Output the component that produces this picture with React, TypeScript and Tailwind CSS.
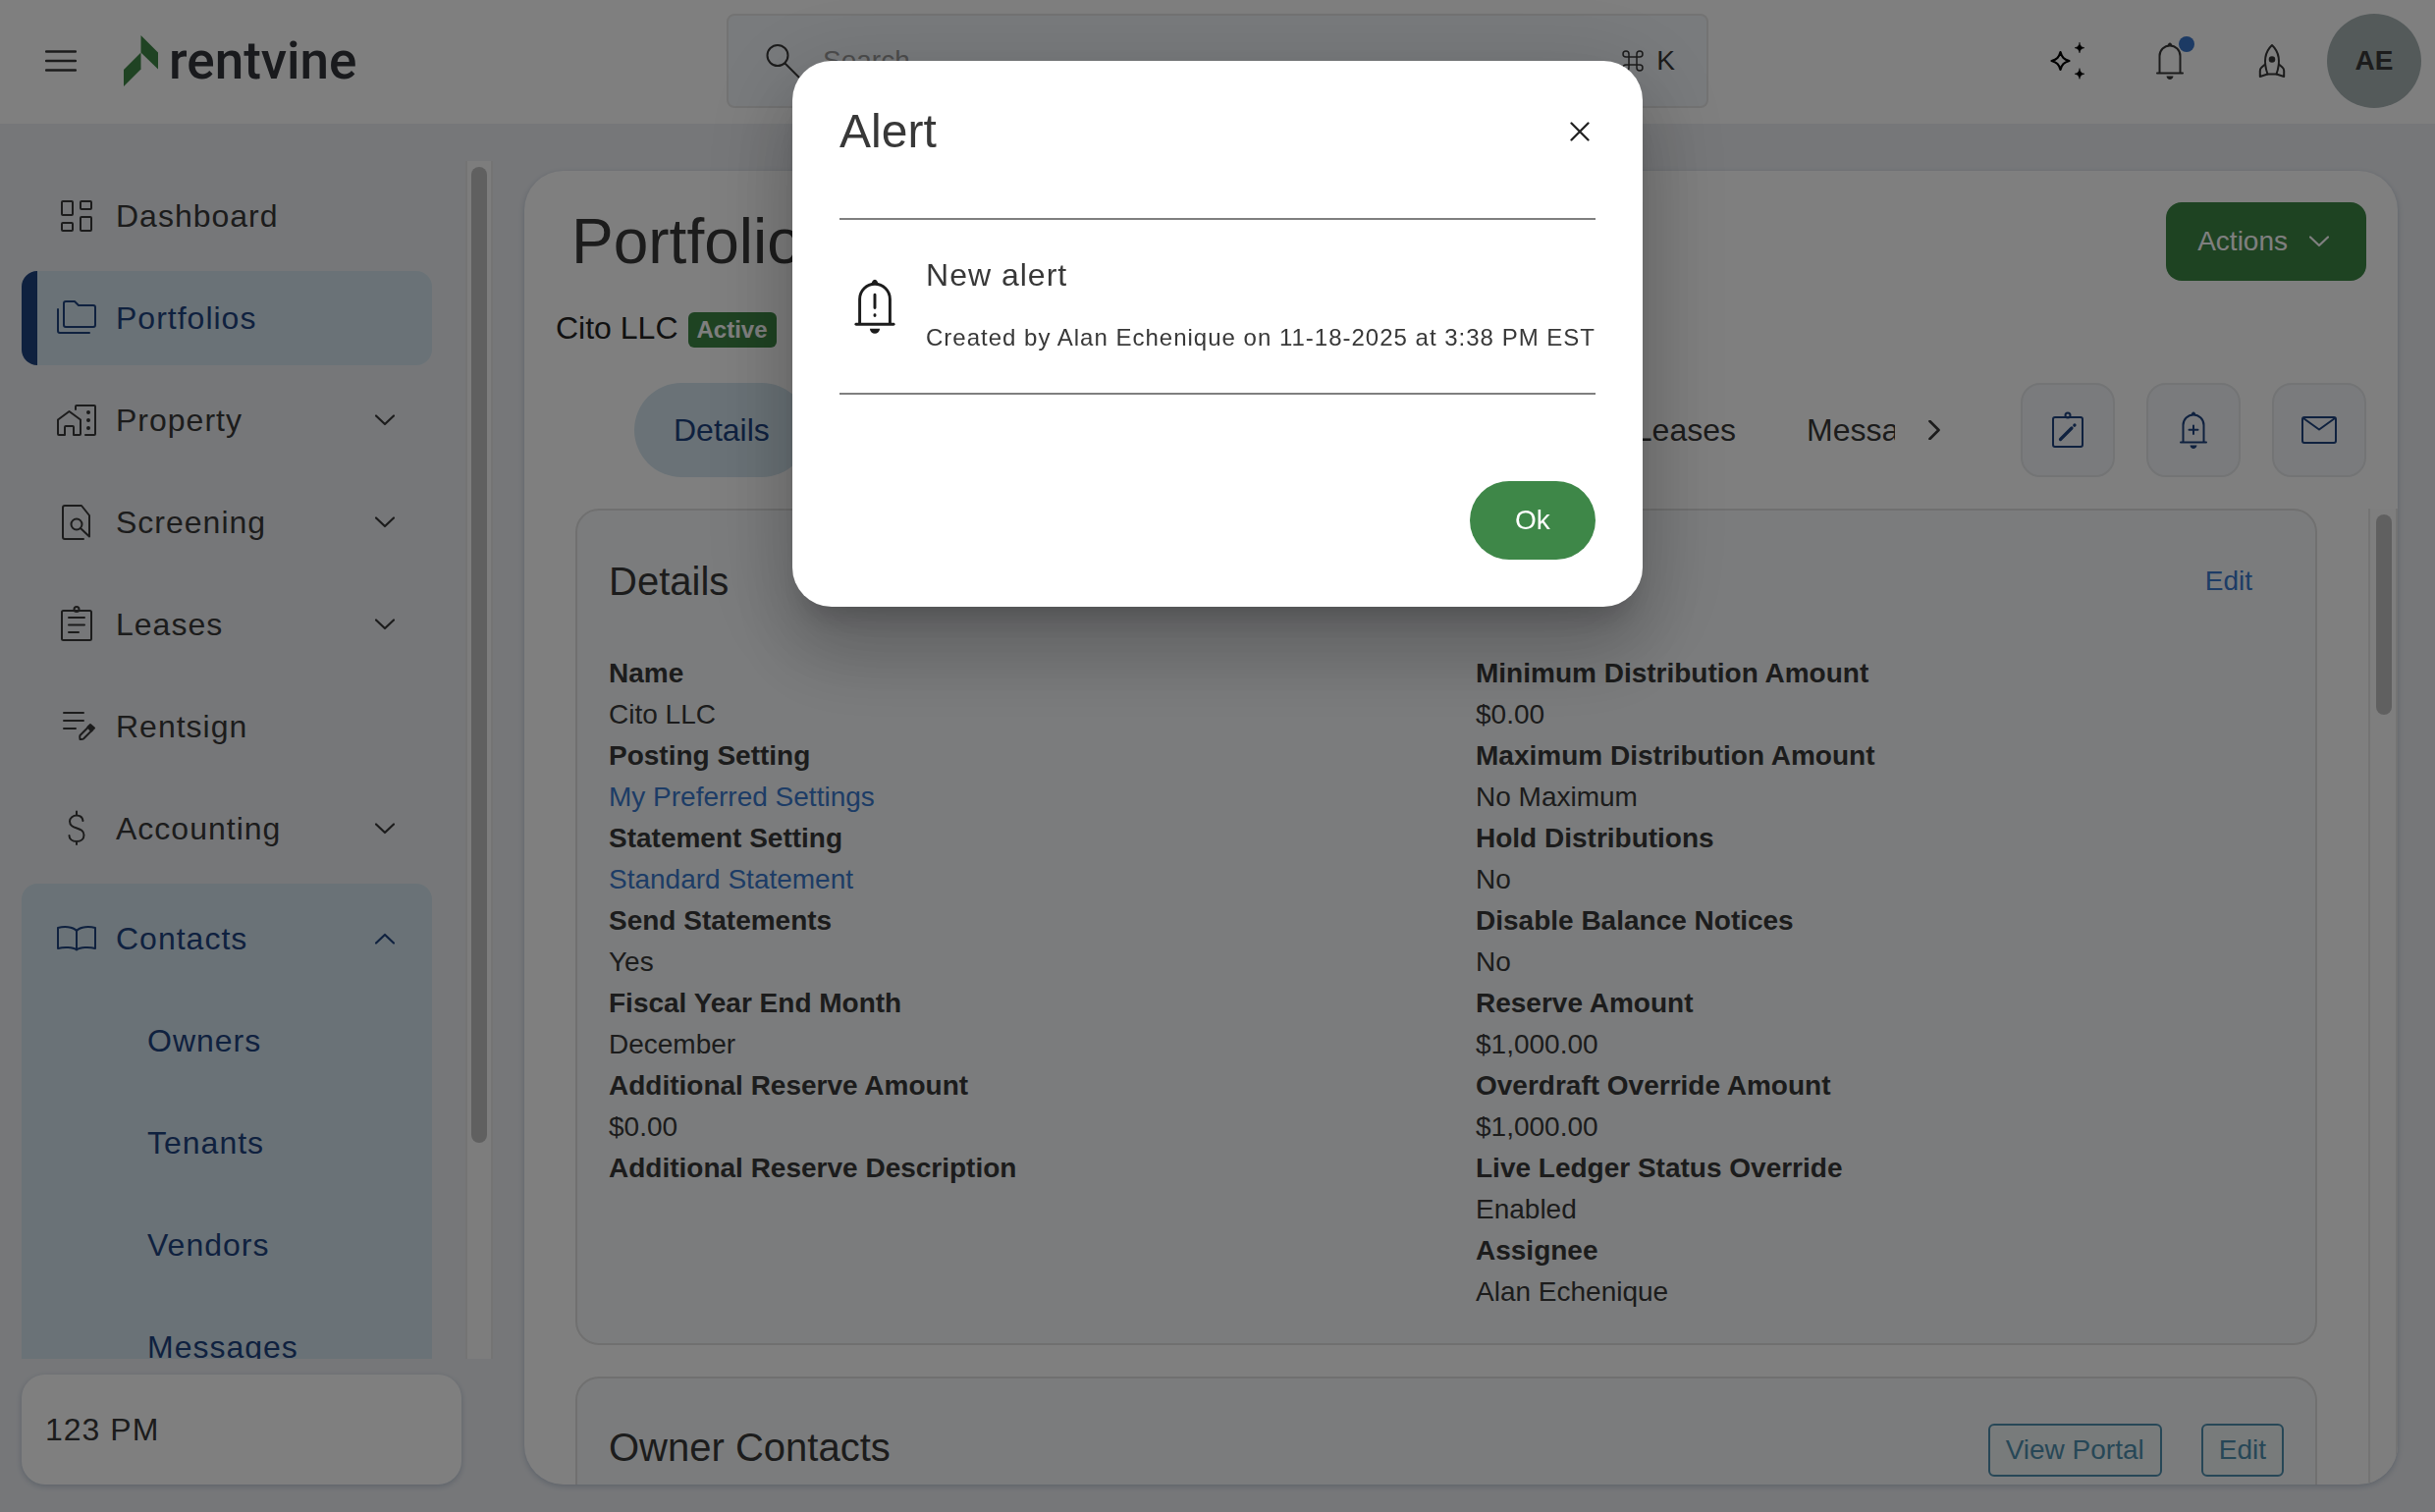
import React from 'react';

const NAVY = 'text-[#1e427e]';

interface IconProps {
  className?: string;
}

interface SvgProps extends IconProps {
  box: string;
  children: React.ReactNode;
}

const Svg: React.FC<SvgProps> = ({ box, className, children }) => (
  <svg viewBox={box} className={className} fill="none" stroke="currentColor" strokeWidth={2} strokeLinejoin="round" strokeLinecap="round" aria-hidden="true">
    {children}
  </svg>
);

const MenuIcon = () => (
  <Svg box="0 0 32 24" className="h-6 w-8">
    <path d="M1 2.500h30M1 12h30M1 21.500h30" strokeWidth={2.300} />
  </Svg>
);

const LeafLogo = () => (
  <svg viewBox="0 0 36 54" className="h-[54px] w-9" aria-hidden="true">
    <path d="M17.500 1 35 18.500V35.500L17.500 18.500Z" fill="#3e8646" />
    <path d="M17.500 18.500V35.500L0 53V36Z" fill="#3e8646" />
  </svg>
);

const SearchIcon = () => (
  <Svg box="0 0 36 36" className="h-9 w-9">
    <circle cx="12" cy="12.500" r="10.500" />
    <path d="m19.500 20.500 14 14" />
  </Svg>
);

const CommandIcon = () => (
  <Svg box="0 0 24 24" className="h-6 w-6">
    <path d="M8 8h8v8H8zM8 8H5a3 3 0 1 1 3-3zM16 8V5a3 3 0 1 1 3 3zM16 16h3a3 3 0 1 1-3 3zM8 16v3a3 3 0 1 1-3-3z" strokeWidth={1.500} />
  </Svg>
);

const SparklesIcon = () => (
  <Svg box="0 0 36 38" className="h-[38px] w-9">
    <path d="M10.500 10c1.500 5.400 3.600 7.500 9 9-5.400 1.500-7.500 3.600-9 9-1.500-5.400-3.600-7.500-9-9 5.400-1.500 7.500-3.600 9-9z" strokeWidth={2.200} />
    <path d="M30 .5c.8 3.500 1.700 4.400 5 5.200-3.300.8-4.200 1.700-5 5.200-.8-3.500-1.700-4.400-5-5.200 3.300-.8 4.200-1.700 5-5.200zM30 27c.8 3.500 1.700 4.400 5 5.200-3.300.8-4.200 1.700-5 5.200-.8-3.500-1.700-4.400-5-5.200 3.300-.8 4.200-1.700 5-5.200z" fill="currentColor" strokeWidth={0.500} />
  </Svg>
);

const BellIcon: React.FC<{ className: string; mark?: 'alert' | 'plus' }> = ({ className, mark }) => (
  <Svg box="0 0 30 38" className={className}>
    <path d="M4.500 31V14a10.500 10.500 0 0 1 21 0v17" />
    <path d="M2 31.500h26" />
    <path d="M15 .5c1.500 0 2 1.500 2.500 3.500h-5c.5-2 1-3.500 2.500-3.500zM11.500 34.500h7c-.3 2.200-1.700 3.500-3.500 3.500s-3.200-1.300-3.500-3.500z" fill="currentColor" stroke="none" />
    {mark === 'alert' && <path d="M15 11v9M15 25v.5" />}
    {mark === 'plus' && <path d="M15 14.500v8.500M10.500 18.800h9" />}
  </Svg>
);

const RocketIcon = () => (
  <Svg box="0 0 28 36" className="h-9 w-7">
    <path d="M9.500 31.500C5.500 20 6.500 9 14 2c7.500 7 8.500 18 4.500 29.500z" />
    <path d="M7 21.500 3.500 24.500Q1.800 26 1.800 28v6l7.700-2.500M21 21.500l3.500 3Q26.200 26 26.200 28v6l-7.700-2.500" />
    <circle cx="14" cy="16.500" r="2.300" fill="currentColor" />
  </Svg>
);

const CloseIcon = () => (
  <Svg box="0 0 20 20" className="h-5 w-5">
    <path d="m1.500 1.500 17 17M18.500 1.500l-17 17" strokeWidth={2.300} />
  </Svg>
);

const ChevronDown: React.FC<IconProps> = ({ className }) => (
  <Svg box="0 0 20 12" className={`h-3 w-5 ${className ?? ''}`}>
    <path d="m1 1.500 9 8.500 9-8.500" strokeWidth={2.200} />
  </Svg>
);

const ChevronRight = () => (
  <Svg box="0 0 12 20" className="h-5 w-3">
    <path d="m1.500 1 9 9-9 9" strokeWidth={2.700} />
  </Svg>
);

const DashboardIcon = () => (
  <Svg box="0 0 40 40" className="h-10 w-10">
    <rect x="5" y="5" width="11" height="14" rx="1" />
    <rect x="24" y="5" width="11" height="8" rx="1" />
    <rect x="5" y="27" width="11" height="8" rx="1" />
    <rect x="24" y="21" width="11" height="14" rx="1" />
  </Svg>
);

const FoldersIcon = () => (
  <Svg box="0 0 40 40" className="h-10 w-10">
    <path d="M7 5a2 2 0 0 1 2-2h9l4 4h15a2 2 0 0 1 2 2v18a2 2 0 0 1-2 2H9a2 2 0 0 1-2-2z" />
    <path d="M1 11v22a2 2 0 0 0 2 2h30" />
  </Svg>
);

const PropertyIcon = () => (
  <Svg box="0 0 40 40" className="h-10 w-10">
    <path d="M1 19.500 12.500 11 24 19.500V34a1 1 0 0 1-1 1h-6v-8a1 1 0 0 0-1-1H9a1 1 0 0 0-1 1v8H2a1 1 0 0 1-1-1z" />
    <path d="M19 9V6a1 1 0 0 1 1-1h18a1 1 0 0 1 1 1v28a1 1 0 0 1-1 1h-9" />
    <path d="M32 12v.1M32 20v.1M32 28v.1" strokeWidth={4} />
  </Svg>
);

const ScreeningIcon = () => (
  <Svg box="0 0 40 40" className="h-10 w-10">
    <path d="M27 37H8a2 2 0 0 1-2-2V5a2 2 0 0 1 2-2h17l8 10v21.500L24 26" />
    <circle cx="20" cy="22" r="5.500" />
  </Svg>
);

const LeasesIcon = () => (
  <Svg box="0 0 40 40" className="h-10 w-10">
    <rect x="5" y="6" width="30" height="30" rx="1.500" />
    <circle cx="20" cy="4.500" r="2.500" />
    <path d="M12 13h16M12 20.500h16M12 28h10" />
  </Svg>
);

const RentsignIcon = () => (
  <Svg box="0 0 40 40" className="h-10 w-10">
    <path d="M7 6h20M7 14h20M7 22h12" />
    <path d="m23.500 29 9-9 3.500 3.500-9 9c-1 .8-3.500.5-3.500.5s-.5-3 0-4z" />
    <path d="m31.500 20.500 2.500-2.500 4 3.500-3 3z" fill="currentColor" />
  </Svg>
);

const DollarIcon = () => (
  <Svg box="0 0 40 40" className="h-10 w-10">
    <path d="M26.500 12c-.5-3.500-3-5.500-6.500-5.500s-7 2.500-7 6c0 9 14.500 5 14.500 14 0 4-3 6.500-7.500 6.500s-7.500-2.500-7.500-6M20 2.500v4M20 33v3" />
  </Svg>
);

const BookIcon = () => (
  <Svg box="0 0 40 40" className="h-10 w-10">
    <path d="M20 12C16 7.500 7 7.500 1 9v21c6-1.500 15-1.500 19 1.500 4-3 13-3 19-1.500V9c-6-1.500-15-1.500-19 3zM20 12v19" />
  </Svg>
);

const NoteIcon = () => (
  <Svg box="0 0 34 38" className="h-[38px] w-[34px]">
    <rect x="2" y="6" width="30" height="30" rx="2" />
    <circle cx="17" cy="4" r="2.500" />
    <path d="M9.500 28.500 21 17M23.800 14.200l.2-.2" strokeWidth={3.200} />
  </Svg>
);

const MailIcon = () => (
  <Svg box="0 0 38 30" className="h-[30px] w-[38px]">
    <rect x="2" y="2" width="34" height="26" rx="2" />
    <path d="m3 3 16 11.500L35 3" />
  </Svg>
);

interface NavEntry {
  label: string;
  icon: React.ReactNode;
  expandable?: boolean;
  active?: boolean;
}

const NAV: NavEntry[] = [
  { label: 'Dashboard', icon: <DashboardIcon /> },
  { label: 'Portfolios', icon: <FoldersIcon />, active: true },
  { label: 'Property', icon: <PropertyIcon />, expandable: true },
  { label: 'Screening', icon: <ScreeningIcon />, expandable: true },
  { label: 'Leases', icon: <LeasesIcon />, expandable: true },
  { label: 'Rentsign', icon: <RentsignIcon /> },
  { label: 'Accounting', icon: <DollarIcon />, expandable: true },
];

const CONTACT_LINKS = ['Owners', 'Tenants', 'Vendors', 'Messages'];

interface Field {
  label: string;
  value?: string;
  link?: boolean;
}

const LEFT_FIELDS: Field[] = [
  { label: 'Name', value: 'Cito LLC' },
  { label: 'Posting Setting', value: 'My Preferred Settings', link: true },
  { label: 'Statement Setting', value: 'Standard Statement', link: true },
  { label: 'Send Statements', value: 'Yes' },
  { label: 'Fiscal Year End Month', value: 'December' },
  { label: 'Additional Reserve Amount', value: '$0.00' },
  { label: 'Additional Reserve Description' },
];

const RIGHT_FIELDS: Field[] = [
  { label: 'Minimum Distribution Amount', value: '$0.00' },
  { label: 'Maximum Distribution Amount', value: 'No Maximum' },
  { label: 'Hold Distributions', value: 'No' },
  { label: 'Disable Balance Notices', value: 'No' },
  { label: 'Reserve Amount', value: '$1,000.00' },
  { label: 'Overdraft Override Amount', value: '$1,000.00' },
  { label: 'Live Ledger Status Override', value: 'Enabled' },
  { label: 'Assignee', value: 'Alan Echenique' },
];

const Header = () => (
  <header className="grid h-[126px] shrink-0 grid-cols-[1fr_1000px_1fr] items-center bg-white px-3.5 pb-0.5">
    <div className="flex items-center gap-12 pl-8">
      <button aria-label="Toggle menu">
        <MenuIcon />
      </button>
      <a href="#home" className="flex items-center gap-2.5 font-[Roboto,sans-serif] text-[53px] leading-[53px] font-medium text-[#32353b]">
        <LeafLogo />
        rentvine
      </a>
    </div>
    <label className="flex h-24 items-center rounded-lg border-2 border-[#e6e6e6] bg-[#f3f6fa] pr-8 pl-[38px]">
      <SearchIcon />
      <input type="search" placeholder="Search" aria-label="Search" className="min-w-0 flex-1 bg-transparent px-[22px] text-[28px] placeholder:text-[#9a9a9a] focus:outline-none" />
      <CommandIcon />
      <kbd className="ml-3 font-[Liberation_Sans,Arial,sans-serif] text-[28px]">K</kbd>
    </label>
    <div className="flex items-center justify-end">
      <button aria-label="Assistant" className="text-black">
        <SparklesIcon />
      </button>
      <button aria-label="Notifications" className="relative ml-[71px]">
        <BellIcon className="h-[38px] w-[30px]" />
        <span className="absolute -top-1.5 -right-2.5 h-4 w-4 rounded-full bg-[#3874c8]" />
      </button>
      <button aria-label="What's new" className="ml-[75px]">
        <RocketIcon />
      </button>
      <button aria-label="Account" className="ml-[42px] h-24 w-24 rounded-full bg-[#a8b4b5] text-[28px] font-bold">
        AE
      </button>
    </div>
  </header>
);

const NavItem: React.FC<{ entry: NavEntry }> = ({ entry }) => (
  <a
    href={`#${entry.label.toLowerCase()}`}
    className={`flex h-24 shrink-0 items-center rounded-2xl pr-[38px] ${
      entry.active ? `border-l-16 border-[#1e427e] bg-[#d4e5ee] pl-5 ${NAVY}` : 'pl-9'
    }`}
  >
    {entry.icon}
    <span className="ml-5 flex-1">{entry.label}</span>
    {entry.expandable && <ChevronDown />}
  </a>
);

const Sidebar = () => (
  <aside className="flex w-[502px] shrink-0 flex-col pt-[38px] pb-7 pl-[22px] text-[32px] tracking-[1px]">
    <div className="flex min-h-0 flex-1">
      <nav className="mr-[34px] flex w-[418px] flex-col gap-2 overflow-hidden pt-2">
        {NAV.map((entry) => (
          <NavItem key={entry.label} entry={entry} />
        ))}
        <div className={`flex shrink-0 flex-col gap-2 rounded-2xl bg-[#d4e5ee] py-2 ${NAVY}`}>
          <button className="flex h-24 items-center pr-[38px] pl-9 text-left tracking-[1px]">
            <BookIcon />
            <span className="ml-5 flex-1">Contacts</span>
            <ChevronDown className="rotate-180" />
          </button>
          {CONTACT_LINKS.map((label) => (
            <a key={label} href={`#${label.toLowerCase()}`} className="flex h-24 items-center pl-32">
              {label}
            </a>
          ))}
        </div>
      </nav>
      <div className="w-7 border-x-2 border-[#e8e8e8] bg-[#fafafa] pt-1.5">
        <div className="mx-auto h-[994px] w-4 rounded-full bg-[#c1c1c1]" />
      </div>
    </div>
    <div className="mt-4 mr-8 flex h-28 shrink-0 items-center rounded-3xl bg-white pl-6 shadow-[0_2px_6px_#b9c4d3]">123 PM</div>
  </aside>
);

const ToolButton: React.FC<{ label: string; children: React.ReactNode }> = ({ label, children }) => (
  <button aria-label={label} className={`flex h-24 w-24 items-center justify-center rounded-[20px] border-2 border-[#e6e8ea] bg-[#f4f7fb] ${NAVY}`}>
    {children}
  </button>
);

const FieldList: React.FC<{ fields: Field[] }> = ({ fields }) => (
  <dl className="px-8 text-[28px] leading-[42px]">
    {fields.map((field) => (
      <React.Fragment key={field.label}>
        <dt className="font-bold">{field.label}</dt>
        {field.value && (
          <dd>
            {field.link ? (
              <a href="#settings" className="text-[#3a78cc]">
                {field.value}
              </a>
            ) : (
              field.value
            )}
          </dd>
        )}
      </React.Fragment>
    ))}
  </dl>
);

const OutlineButton: React.FC<{ children: React.ReactNode }> = ({ children }) => (
  <button className="h-[54px] rounded-md border-2 border-[#4e8fae] bg-[#f0f6f6] px-4 text-[28px] text-[#4e8fae]">{children}</button>
);

const Portfolio = () => (
  <main className="mt-12 mr-[38px] mb-7 ml-8 flex min-w-0 flex-1 flex-col overflow-hidden rounded-[40px] bg-white shadow-[0_2px_6px_#b9c4d3]">
    <div className="flex items-start justify-between pt-8 pr-8 pl-12">
      <h1 className="text-[64px] leading-[80px]">Portfolio</h1>
      <button className="flex h-20 items-center gap-[22px] rounded-2xl bg-[#3d8645] px-8 text-[28px] text-white">
        Actions
        <ChevronDown className="mr-1.5" />
      </button>
    </div>
    <div className="mt-5 flex h-14 items-center gap-2.5 pl-8 text-[32px] text-[#222222]">
      Cito LLC
      <span className="mt-1 rounded-md bg-[#3d8645] px-[9px] text-[24px] leading-9 font-bold text-white">Active</span>
    </div>
    <div className="mt-7 mb-8 flex items-center pr-8 pl-28">
      <div className="flex min-w-0 flex-1 items-center overflow-hidden text-[32px]">
        <button className={`h-24 rounded-full bg-[#d4e5ee] px-10 ${NAVY}`}>Details</button>
        <button className="ml-auto h-24 px-9">Leases</button>
        <div className="w-[126px] overflow-hidden">
          <button className="h-24 pl-9">Messages</button>
        </div>
      </div>
      <button aria-label="More tabs" className="mr-[82px] ml-[34px]">
        <ChevronRight />
      </button>
      <div className="flex gap-8">
        <ToolButton label="Add note">
          <NoteIcon />
        </ToolButton>
        <ToolButton label="Add alert">
          <BellIcon className="h-[38px] w-[30px]" mark="plus" />
        </ToolButton>
        <ToolButton label="Send message">
          <MailIcon />
        </ToolButton>
      </div>
    </div>
    <div className="flex min-h-0 flex-1">
      <div className="ml-[52px] flex min-w-0 flex-1 flex-col gap-8 overflow-hidden">
        <section className="h-[852px] shrink-0 rounded-3xl border-2 border-[#e0e0e0] bg-[#f6f8fb] pt-11">
          <div className="mb-[45px] flex items-center justify-between pr-16 pl-8">
            <h2 className="text-[40px] leading-[56px]">Details</h2>
            <button className="text-[28px] text-[#3a78cc]">Edit</button>
          </div>
          <div className="grid grid-cols-2 pr-1">
            <FieldList fields={LEFT_FIELDS} />
            <FieldList fields={RIGHT_FIELDS} />
          </div>
        </section>
        <section className="shrink-0 rounded-t-3xl border-2 border-b-0 border-[#e0e0e0] bg-[#f6f8fb] px-8 pt-[46px] pb-20">
          <div className="flex items-start gap-10">
            <h2 className="mr-auto text-[40px] leading-12">Owner Contacts</h2>
            <OutlineButton>View Portal</OutlineButton>
            <OutlineButton>Edit</OutlineButton>
          </div>
        </section>
      </div>
      <div className="ml-[52px] w-[30px] border-x-2 border-[#e8e8e8] bg-[#fcfcfc] pt-1.5 pl-0.5">
        <div className="mx-auto h-[204px] w-4 rounded-full bg-[#c1c1c1]" />
      </div>
    </div>
  </main>
);

const AlertDialog = () => (
  <div className="fixed inset-0 flex items-start justify-center bg-black/50 pt-[62px]">
    <div
      role="dialog"
      aria-modal="true"
      aria-labelledby="alert-title"
      className="rounded-[40px] bg-white p-12 shadow-[0_22px_30px_-14px_rgba(0,0,0,0.2),0_48px_76px_6px_rgba(0,0,0,0.14),0_18px_92px_16px_rgba(0,0,0,0.12)]"
    >
      <div className="flex h-12 items-center justify-between pr-1.5">
        <h2 id="alert-title" className="text-[48px] leading-[48px]">
          Alert
        </h2>
        <button aria-label="Close" className="text-[#222222]">
          <CloseIcon />
        </button>
      </div>
      <div className="mt-16 flex h-[180px] items-center border-y-2 border-[#7f7f7f] tracking-[1px]">
        <BellIcon className="mx-3.5 h-14 w-11 text-[#1c1c1c]" mark="alert" />
        <div className="ml-4">
          <p className="text-[32px] leading-12">New alert</p>
          <p className="mt-4 text-[24px] leading-12 whitespace-nowrap">Created by Alan Echenique on 11-18-2025 at 3:38 PM EST</p>
        </div>
      </div>
      <div className="mt-22 flex justify-end">
        <button className="h-20 w-32 rounded-full bg-[#3e8748] text-[28px] text-white">Ok</button>
      </div>
    </div>
  </div>
);

export default function App() {
  return (
    <div className="flex h-screen flex-col overflow-hidden bg-[#edeff3] font-[Liberation_Sans,Arial,sans-serif] text-[#383838]">
      <Header />
      <div className="flex min-h-0 flex-1">
        <Sidebar />
        <Portfolio />
      </div>
      <AlertDialog />
    </div>
  );
}
